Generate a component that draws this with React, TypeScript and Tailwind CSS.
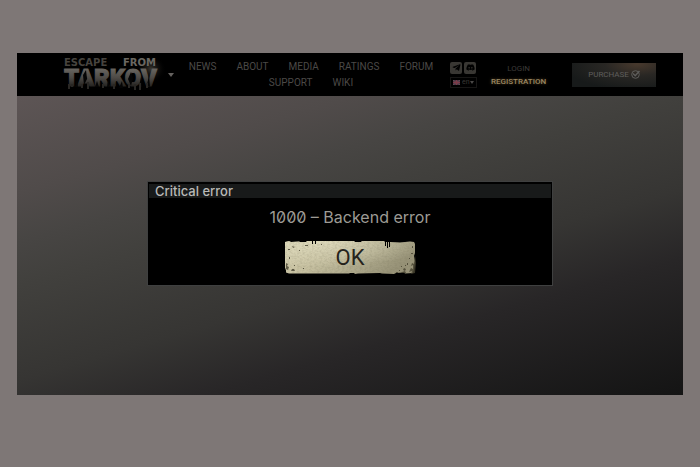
import { FaDiscord, FaTelegramPlane } from 'react-icons/fa';

interface NavItem {
  label: string;
  href: string;
}

const navItems: NavItem[] = [
  { label: 'NEWS', href: '#news' },
  { label: 'ABOUT', href: '#about' },
  { label: 'MEDIA', href: '#media' },
  { label: 'RATINGS', href: '#ratings' },
  { label: 'FORUM', href: '#forum' },
  { label: 'SUPPORT', href: '#support' },
  { label: 'WIKI', href: '#wiki' },
];

const Logo = () => (
  <a href="#home" aria-label="Escape from Tarkov" className="shrink-0">
    <svg width="104" height="42" viewBox="0 0 104 42">
      <defs>
        <linearGradient id="logoFade" x1="0" y1="0" x2="0" y2="1">
          <stop offset="0.2" stopColor="#66635e" />
          <stop offset="0.5" stopColor="#4c4945" />
          <stop offset="0.9" stopColor="#171614" />
        </linearGradient>
        <radialGradient id="logoGlow">
          <stop offset="0" stopColor="#5c564c" stopOpacity="0.65" />
          <stop offset="1" stopColor="#000" stopOpacity="0" />
        </radialGradient>
      </defs>
      <ellipse cx="88" cy="15" rx="15" ry="14" fill="url(#logoGlow)" />
      <text x="1" y="12" fontSize="10" fontWeight="700" fill="#47443f" fontFamily="DejaVu Sans, sans-serif">ESCAPE</text>
      <text x="60" y="12" fontSize="10" fontWeight="700" fill="#6b6862" fontFamily="DejaVu Sans, sans-serif">FROM</text>
      <text
        x="1"
        y="32"
        fontSize="24"
        fontWeight="900"
        fill="url(#logoFade)"
        stroke="url(#logoFade)"
        fontFamily="Roboto, sans-serif"
      >
        TARKOV
      </text>
      {/* Worn edges and drips */}
      <path
        d="M12 33l2-7 1 7zM20 21l3-5 1 9-3 6zM32 33l2-6 2 6zM44 33l1-8 2 8zM56 34l3-7 1 7zM65 25l3-7 2 6-2 8zM76 33l2-10 1 10zM84 31l2-10 1 12z"
        fill="#050505"
      />
      <path
        d="M6 30v5M9 30v3M19 30v4M25 28v7M40 30v4M51 30v5M66 30v4M72 30v6M77 29v7M84 29v5"
        stroke="#292724"
        strokeWidth="2"
      />
    </svg>
  </a>
);

const socialClass = 'flex h-3 w-3 items-center justify-center rounded-xs bg-[#393733] text-[9px] text-black';

const Header = () => (
  <header className="flex h-[43px] items-center bg-black pr-[27px] pl-[46px] text-[10px] text-[#4b4947]">
    <Logo />
    <button type="button" aria-label="Open menu" className="flex h-4 w-2 shrink-0 items-center justify-center">
      <svg width="6" height="4" viewBox="0 0 6 4" fill="#65625f">
        <path d="M0 0h6L3 4z" />
      </svg>
    </button>

    <nav className="ml-1 flex max-w-[264px] flex-1 flex-wrap justify-center gap-x-5 leading-4">
      {navItems.map((item) => (
        <a key={item.label} href={item.href}>
          {item.label}
        </a>
      ))}
    </nav>

    <div className="ml-[7px] flex w-7 shrink-0 flex-col gap-[3px]">
      <div className="flex gap-[2px]">
        <a href="#telegram" aria-label="Telegram" className={socialClass}>
          <FaTelegramPlane />
        </a>
        <a href="#discord" aria-label="Discord" className={socialClass}>
          <FaDiscord />
        </a>
      </div>
      <div className="flex h-[11px] w-[27px] items-center border border-[#171615] px-[2px]">
        <svg width="7" height="5" viewBox="0 0 7 5" className="shrink-0">
          <path d="M0 0h7v5H0z" fill="#3a3446" />
          <path d="M0 0l7 5M7 0L0 5" stroke="#6b5055" />
          <path d="M3.5 0v5M0 2.5h7" stroke="#7d3a48" strokeWidth="1.5" />
        </svg>
        <select
          aria-label="Language"
          defaultValue="en"
          className="ml-[2px] w-2 min-w-0 appearance-none bg-transparent text-[7px] leading-none text-[#393735]"
        >
          <option value="en">en</option>
          <option value="ru">ru</option>
        </select>
        <svg width="4" height="3" viewBox="0 0 4 3" fill="#4b4947" className="ml-auto shrink-0">
          <path d="M0 0h4L2 3z" />
        </svg>
      </div>
    </div>

    <div className="ml-[13px] flex shrink-0 flex-col items-center text-[8px] leading-[13px]">
      <a href="#login" className="text-[#3d3b39]">
        LOGIN
      </a>
      <a href="#registration" className="font-medium text-[#9a8762] [text-shadow:0_0_3px_#5a4524]">
        REGISTRATION
      </a>
    </div>

    <button
      type="button"
      className="ml-auto flex h-6 w-[84px] shrink-0 items-center justify-center gap-[2px] bg-[radial-gradient(ellipse_at_78%_5%,#48392d_0%,#292724_35%,#171a1a_80%)] text-[8px] text-[#5f5e5c]"
    >
      PURCHASE
      <svg width="9" height="9" viewBox="0 0 9 9" fill="none" stroke="currentColor">
        <circle cx="4.5" cy="4.5" r="3.8" />
        <path d="M2 3.5l2.2 2.2L8.5 1" strokeWidth="1.4" />
      </svg>
    </button>
  </header>
);

const OkButton = () => (
  <button type="button" className="relative mx-auto block h-[34px] w-[131px] text-[22px] leading-[34px] text-[#25231c]">
    <svg width="131" height="34" viewBox="0 0 131 34" className="absolute inset-0">
      <defs>
        <linearGradient id="plate" x1="0" y1="0" x2="1" y2="0.3">
          <stop offset="0" stopColor="#d6d1b1" />
          <stop offset="0.35" stopColor="#c8c2a2" />
          <stop offset="0.65" stopColor="#b4af91" />
          <stop offset="1" stopColor="#989378" />
        </linearGradient>
        <radialGradient id="shine" cx="0.3" cy="0" r="0.8">
          <stop offset="0" stopColor="#e6e2c6" stopOpacity="0.65" />
          <stop offset="1" stopColor="#e6e2c6" stopOpacity="0" />
        </radialGradient>
        <filter id="grain" x="0" y="0" width="1" height="1">
          <feTurbulence type="fractalNoise" baseFrequency="0.4 0.6" numOctaves="2" seed="4" />
          <feColorMatrix values="0 0 0 0 0.15  0 0 0 0 0.14  0 0 0 0 0.08  0 0 0 1.6 -0.62" />
          <feComposite in2="SourceGraphic" operator="in" />
        </filter>
        <path
          id="plateShape"
          d="M0 1l4-1 2 1 8-.5 1 .5h6l1-1h5v3h1V0h2v3h1V0h38l1 1h6l1-1h22l1 1v4h1V1h1v6h1V1h1v5h1V1l10 .5 10-1 4 .5 1 2v9l-1 3 1 5-1 8-1 4-8 .5-1-1-8 .5-2 1-12-.5-2-.5-22 .5-3 .5-1-1h-4l-1 .5H4l-3-1v-2l-1-3V9z"
        />
      </defs>
      <use href="#plateShape" fill="url(#plate)" />
      <use href="#plateShape" fill="url(#shine)" />
      <use href="#plateShape" filter="url(#grain)" opacity="0.25" />
      {/* Scratches and chipped paint */}
      <g fill="#45412f" opacity="0.8">
        <path d="M1 22l2 1-1 2 2 1-1 3-2-1zM7 28h2l1 2H6zM4 16h1v2H4zM9 24h1v1H9zM3 8h2v1H3zM7 5l3 1-2 1zM14 9h1v1h-1zM18 27h1v1h-1zM20 4h3v1h-3zM36 3h1v1h-1z" />
        <path d="M130 14l1 8-1 10-4 1 1-3-3 1 2-4 2 1v-4l-2 1 1-3 2 1zM119 27l2 1-1 2-2-1zM122 22h1v2h-1zM117 31l3-1 1 2h-5zM124 17h1v1h-1zM114 29h1v1h-1zM126 12h2v1h-2zM120 24h1v1h-1zM116 25h1v1h-1zM127 5h1v2h-1zM111 31h2v1h-2z" />
      </g>
    </svg>
    <span className="relative">OK</span>
  </button>
);

const ErrorDialog = () => (
  <div
    role="alertdialog"
    aria-labelledby="error-title"
    aria-describedby="error-message"
    className="w-full max-w-[406px] border border-[#3f4040] bg-black px-[1px] pt-[2px] pb-[10px]"
  >
    <h1
      id="error-title"
      className="bg-[#181a1a] px-[6px] font-['Inter',sans-serif] text-[13px] leading-[14px] font-medium text-[#b9b9b7]"
    >
      Critical error
    </h1>
    <p id="error-message" className="pt-[7px] pb-3 text-center font-['Inter',sans-serif] text-base leading-6 text-[#9d9b95] slashed-zero">
      1000 – Backend error
    </p>
    <OkButton />
  </div>
);

const App = () => {
  return (
    <div className="flex min-h-screen flex-col bg-[#7e7776] px-[17px] pt-[53px] pb-[72px] font-['Roboto',sans-serif]">
      <Header />
      <main className="flex flex-1 items-start justify-center bg-[linear-gradient(164deg,#5d5555_0%,#504b4a_20%,#474543_30%,#41403d_39%,#363533_58%,#282627_72%,#141414_100%)] pt-[85px] pb-8">
        <ErrorDialog />
      </main>
    </div>
  );
};

export default App;
